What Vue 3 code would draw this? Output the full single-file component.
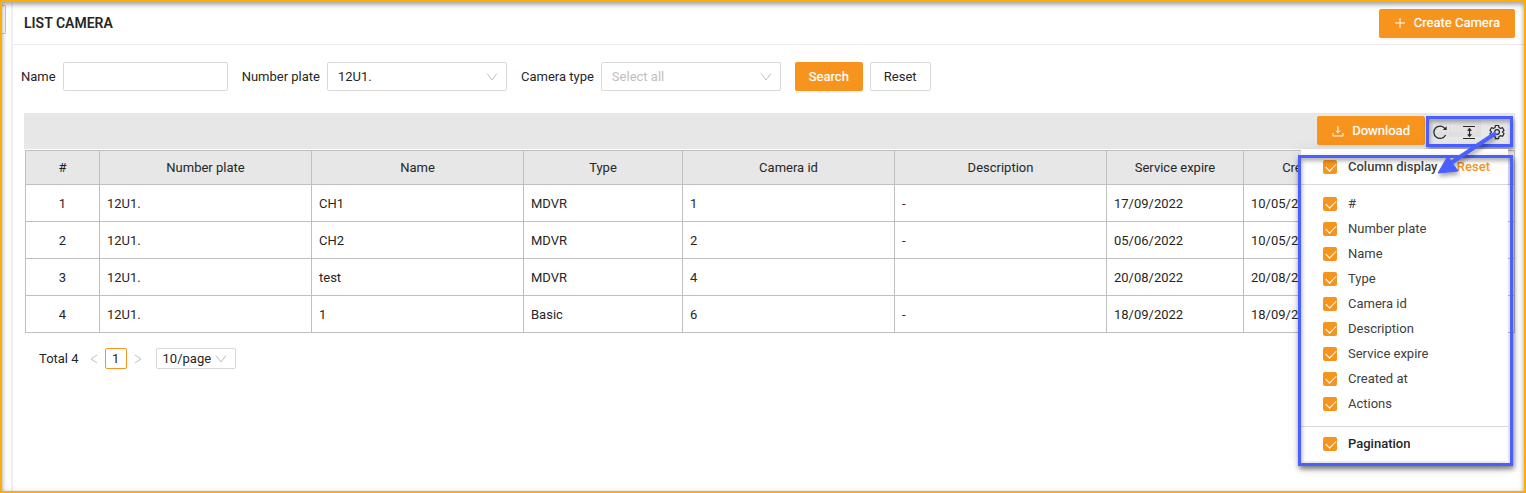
<script setup>
import { ref } from 'vue'

const name = ref('')
const plate = ref('12U1.')
const cameraType = ref('')
const pageSize = ref('10/page')

const columns = [
  { key: 'index', label: '#' },
  { key: 'plate', label: 'Number plate' },
  { key: 'name', label: 'Name' },
  { key: 'type', label: 'Type' },
  { key: 'camera', label: 'Camera id' },
  { key: 'description', label: 'Description' },
  { key: 'expire', label: 'Service expire' },
  { key: 'created', label: 'Created at' },
  { key: 'actions', label: 'Actions' },
]

const rows = [
  { index: 1, plate: '12U1.', name: 'CH1', type: 'MDVR', camera: '1', description: '-', expire: '17/09/2022', created: '10/05/2022' },
  { index: 2, plate: '12U1.', name: 'CH2', type: 'MDVR', camera: '2', description: '-', expire: '05/06/2022', created: '10/05/2022' },
  { index: 3, plate: '12U1.', name: 'test', type: 'MDVR', camera: '4', description: '', expire: '20/08/2022', created: '20/08/2022' },
  { index: 4, plate: '12U1.', name: '1', type: 'Basic', camera: '6', description: '-', expire: '18/09/2022', created: '18/09/2022' },
]

const shown = ref(columns.map((c) => c.key))
const allShown = ref(true)
const pagination = ref(true)
</script>

<template>
  <div class="frame">
    <aside class="rail"><span class="rail-tab"></span></aside>
    <main class="page">
      <header class="page-head">
        <h1>LIST CAMERA</h1>
        <button type="button" class="btn primary create">
          <svg width="12" height="12" viewBox="0 0 12 12"><path d="M6 1v10M1 6h10" /></svg>
          Create Camera
        </button>
      </header>

      <form class="filters" @submit.prevent>
        <label for="f-name">Name</label>
        <input id="f-name" v-model="name" class="field" type="text" />
        <label for="f-plate">Number plate</label>
        <div class="select">
          <select id="f-plate" v-model="plate" class="field">
            <option>12U1.</option>
          </select>
          <svg width="12" height="12" viewBox="0 0 12 12"><path d="M1 2.5l5 6.5 5-6.5" /></svg>
        </div>
        <label for="f-type">Camera type</label>
        <div class="select">
          <select id="f-type" v-model="cameraType" class="field" :class="{ empty: !cameraType }">
            <option value="">Select all</option>
            <option>MDVR</option>
            <option>Basic</option>
          </select>
          <svg width="12" height="12" viewBox="0 0 12 12"><path d="M1 2.5l5 6.5 5-6.5" /></svg>
        </div>
        <button type="submit" class="btn primary search">Search</button>
        <button type="reset" class="btn">Reset</button>
      </form>

      <section class="list">
        <div class="toolbar">
          <button type="button" class="btn primary download">
            <svg width="12" height="12" viewBox="0 0 12 12"><path d="M6 1v6.500M3.800 5.500L6 7.700l2.200-2.200M1 8v3h10V8" /></svg>
            Download
          </button>
          <div class="tools">
            <span class="tooltip">Settings</span>
            <button type="button" aria-label="Reload">
              <svg width="16" height="16" viewBox="0 0 16 16"><path d="M13.600 11A6.200 6.200 0 1 1 13.200 4.800" /><path d="M14.600 2.300v3.700h-3.700z" class="solid" /></svg>
            </button>
            <button type="button" aria-label="Density">
              <svg width="16" height="16" viewBox="0 0 16 16"><path d="M2 2.500h12M2 14.500h12M8.500 5v7" /><path d="M8.500 3.800l2.500 3H6zM8.500 13.200l2.500-3H6z" class="solid" /></svg>
            </button>
            <button type="button" aria-label="Settings">
              <svg width="16" height="16" viewBox="0 0 16 16"><path d="M6.500 1.500h3l.5 2 1.500.9 2-.6L15 6.400 13.500 8 15 9.700l-1.500 2.600-2-.6-1.500.9-.5 2h-3l-.5-2-1.500-.9-2 .6L1 9.700 2.500 8 1 6.400l1.500-2.600 2 .6L6 3.500z" /><circle cx="8" cy="8" r="2.400" /></svg>
            </button>

            <div class="menu">
              <div class="menu-head">
                <label><input v-model="allShown" type="checkbox" />Column display</label>
                <a href="#">Reset</a>
              </div>
              <div class="menu-list">
                <label v-for="c in columns" :key="c.key">
                  <input v-model="shown" type="checkbox" :value="c.key" />{{ c.label }}
                </label>
              </div>
              <div class="menu-foot">
                <label><input v-model="pagination" type="checkbox" />Pagination</label>
              </div>
            </div>

            <svg class="arrow" width="80" height="60" viewBox="0 0 80 60">
              <path d="M67 17L22 47" class="shaft" />
              <path d="M9 57L19 40 23 47 29 55z" class="tip" />
            </svg>
          </div>
        </div>

        <table>
          <colgroup>
            <col v-for="c in columns" :key="c.key" :class="'c-' + c.key" />
          </colgroup>
          <thead>
            <tr><th v-for="c in columns" :key="c.key" scope="col">{{ c.label }}</th></tr>
          </thead>
          <tbody>
            <tr v-for="r in rows" :key="r.index">
              <td v-for="c in columns" :key="c.key" :class="{ mid: c.key === 'index' }">{{ r[c.key] }}</td>
            </tr>
          </tbody>
        </table>

        <nav class="pager" aria-label="Pages">
          <span class="total">Total 4</span>
          <button type="button" class="step" aria-label="Previous"><svg width="8" height="10" viewBox="0 0 8 10"><path d="M7 1L1 5l6 4" /></svg></button>
          <button type="button" class="current">1</button>
          <button type="button" class="step" aria-label="Next"><svg width="8" height="10" viewBox="0 0 8 10"><path d="M1 1l6 4-6 4" /></svg></button>
          <div class="select small">
            <select v-model="pageSize" class="field" aria-label="Page size">
              <option>10/page</option>
            </select>
            <svg width="12" height="12" viewBox="0 0 12 12"><path d="M1 2.5l5 6.5 5-6.5" /></svg>
          </div>
        </nav>
      </section>
    </main>
  </div>
</template>

<style>
body {
  margin: 0;
}
</style>

<style scoped>
* {
  box-sizing: border-box;
}
.frame {
  position: relative;
  display: flex;
  min-height: 100vh;
  border: 2px solid #ffab0a;
  background: #fff;
  color: #262626;
  font: 13px/20px Roboto, "Liberation Sans", sans-serif;
}
.frame::after {
  content: "";
  position: absolute;
  inset: 0;
  box-shadow: inset 0 3px 5px rgba(0, 0, 0, 0.3), inset 0 0 5px rgba(0, 0, 0, 0.12);
  pointer-events: none;
}
button,
input,
select {
  font: inherit;
  color: inherit;
  margin: 0;
}
svg {
  fill: none;
  stroke: currentColor;
}
.rail {
  flex: none;
  width: 11px;
  border-right: 2px solid #f0f0f0;
}
.rail-tab {
  display: block;
  width: 4px;
  height: 29px;
  margin-top: 3px;
  border: 1px solid #c8c8c8;
  border-left: 0;
  border-radius: 0 2px 2px 0;
}
.page {
  flex: 1;
  min-width: 0;
}
.page-head {
  display: flex;
  align-items: center;
  justify-content: space-between;
  height: 43px;
  padding: 0 9px 0 11px;
  border-bottom: 1px solid #ececec;
}
h1 {
  margin: 0;
  font-size: 14px;
  font-weight: 600;
}
.btn {
  height: 29px;
  padding: 0 13px;
  border: 1px solid #d9d9d9;
  border-radius: 2px;
  background: #fff;
}
.btn.primary {
  border-color: #f7941e;
  background: #f7941e;
  color: #fff;
  text-shadow: 0 0 1px rgba(255, 255, 255, 0.6);
  box-shadow: 0 2px 0 rgba(0, 0, 0, 0.04);
}
.btn.create,
.btn.download {
  display: flex;
  align-items: center;
  gap: 8px;
  padding: 0 14px;
}
.filters {
  display: flex;
  align-items: center;
  padding: 17px 9px 22px 8px;
}
.filters label {
  margin-right: 7px;
}
.field {
  width: 165px;
  height: 29px;
  padding: 0 10px;
  border: 1px solid #d9d9d9;
  border-radius: 2px;
  background: #fff;
  appearance: none;
  outline: 0;
}
.filters > .field,
.filters > .select {
  margin-right: 14px;
}
.select {
  position: relative;
  width: 180px;
  height: 29px;
}
.select .field {
  width: 100%;
}
.select svg {
  position: absolute;
  top: 9px;
  right: 9px;
  color: #bfbfbf;
  pointer-events: none;
}
.select .empty {
  color: #bfbfbf;
}
.search {
  margin-right: 7px;
}
.list {
  padding: 0 9px 0 11px;
}
.toolbar {
  display: flex;
  justify-content: flex-end;
  align-items: flex-start;
  height: 36px;
  margin-bottom: 1px;
  padding: 3px 2px 0 0;
  background: #e7e7e7;
}
.tools {
  position: relative;
  display: flex;
  align-items: center;
  justify-content: space-between;
  width: 87px;
  height: 31px;
  margin-left: 1px;
  padding: 0 5px 0 3px;
  border: 3px solid #4a5fff;
  box-shadow: 1px 3px 4px rgba(0, 0, 0, 0.4), inset 1px 3px 4px rgba(0, 0, 0, 0.3);
}
.tools button {
  position: relative;
  display: flex;
  padding: 0;
  border: 0;
  background: none;
}
.tools button svg {
  stroke-width: 1.2;
}
.tools .solid {
  fill: currentColor;
  stroke: none;
}
.tooltip {
  position: absolute;
  top: 0;
  left: 0;
  padding: 0 4px;
  background: rgba(0, 0, 0, 0.03);
  color: rgba(255, 255, 255, 0.35);
  font-size: 12px;
  line-height: 18px;
}
.menu {
  position: absolute;
  top: 30px;
  right: 2px;
  width: 207px;
  background: #fff;
  color: #404040;
  box-shadow: 0 4px 16px rgba(0, 0, 0, 0.12);
}
.menu::after {
  content: "";
  position: absolute;
  inset: 6px -5px -5px -3px;
  border: 3px solid #4a5fff;
  box-shadow: 1px 3px 5px rgba(0, 0, 0, 0.5), inset 1px 3px 4px rgba(0, 0, 0, 0.3);
  pointer-events: none;
}
.menu label {
  display: flex;
  align-items: center;
  gap: 11px;
  height: 25px;
}
.menu-head,
.menu-foot {
  display: flex;
  align-items: center;
  justify-content: space-between;
  height: 36px;
  padding: 0 18px 0 22px;
  font-weight: 500;
}
.menu-head {
  border-bottom: 1px solid #d9d9d9;
}
.menu-foot {
  height: 35px;
  border-top: 1px solid #d9d9d9;
  color: #262626;
}
.menu-head a {
  color: #f7941e;
  text-decoration: none;
}
.menu-list {
  padding: 6px 22px 10px;
}
.menu input {
  position: relative;
  width: 14px;
  height: 14px;
  border-radius: 2px;
  background: #f7941e;
  appearance: none;
}
.menu input::after {
  content: "";
  position: absolute;
  top: 3px;
  left: 3px;
  width: 9px;
  height: 5px;
  border: solid #fff;
  border-width: 0 0 1px 1px;
  transform: rotate(-45deg);
}
.arrow {
  position: absolute;
  top: -3px;
  left: 0;
  color: #4a5fff;
  pointer-events: none;
  filter: drop-shadow(1px 3px 2px rgba(0, 0, 0, 0.35));
}
.shaft {
  stroke-width: 4;
}
.tip {
  fill: currentColor;
}
table {
  width: calc(100% - 1px);
  margin-left: 1px;
  table-layout: fixed;
  border-collapse: collapse;
}
.c-index {
  width: 74px;
}
.c-plate,
.c-name,
.c-camera,
.c-description {
  width: 212px;
}
.c-type {
  width: 159px;
}
.c-expire,
.c-created {
  width: 137px;
}
th,
td {
  height: 37px;
  padding: 2px 7px 0;
  border: 1px solid #bfbfbf;
  text-align: left;
}
th {
  height: 34px;
  padding: 0 7px;
  background: #e7e7e7;
  font-weight: 400;
  text-align: center;
}
.mid {
  text-align: center;
}
.pager {
  display: flex;
  align-items: center;
  padding: 15px 0 0 15px;
}
.step {
  display: flex;
  justify-content: center;
  width: 22px;
  padding: 0;
  border: 0;
  background: none;
  color: #bfbfbf;
}
.total {
  margin-right: 4px;
}
.current {
  width: 22px;
  height: 21px;
  padding: 0;
  border: 1px solid #f7941e;
  border-radius: 2px;
  background: #fff;
  line-height: 19px;
}
.small {
  width: 80px;
  height: 21px;
  margin-left: 7px;
}
.small .field {
  height: 21px;
  padding: 0 6px;
}
.small svg {
  top: 5px;
}
</style>
